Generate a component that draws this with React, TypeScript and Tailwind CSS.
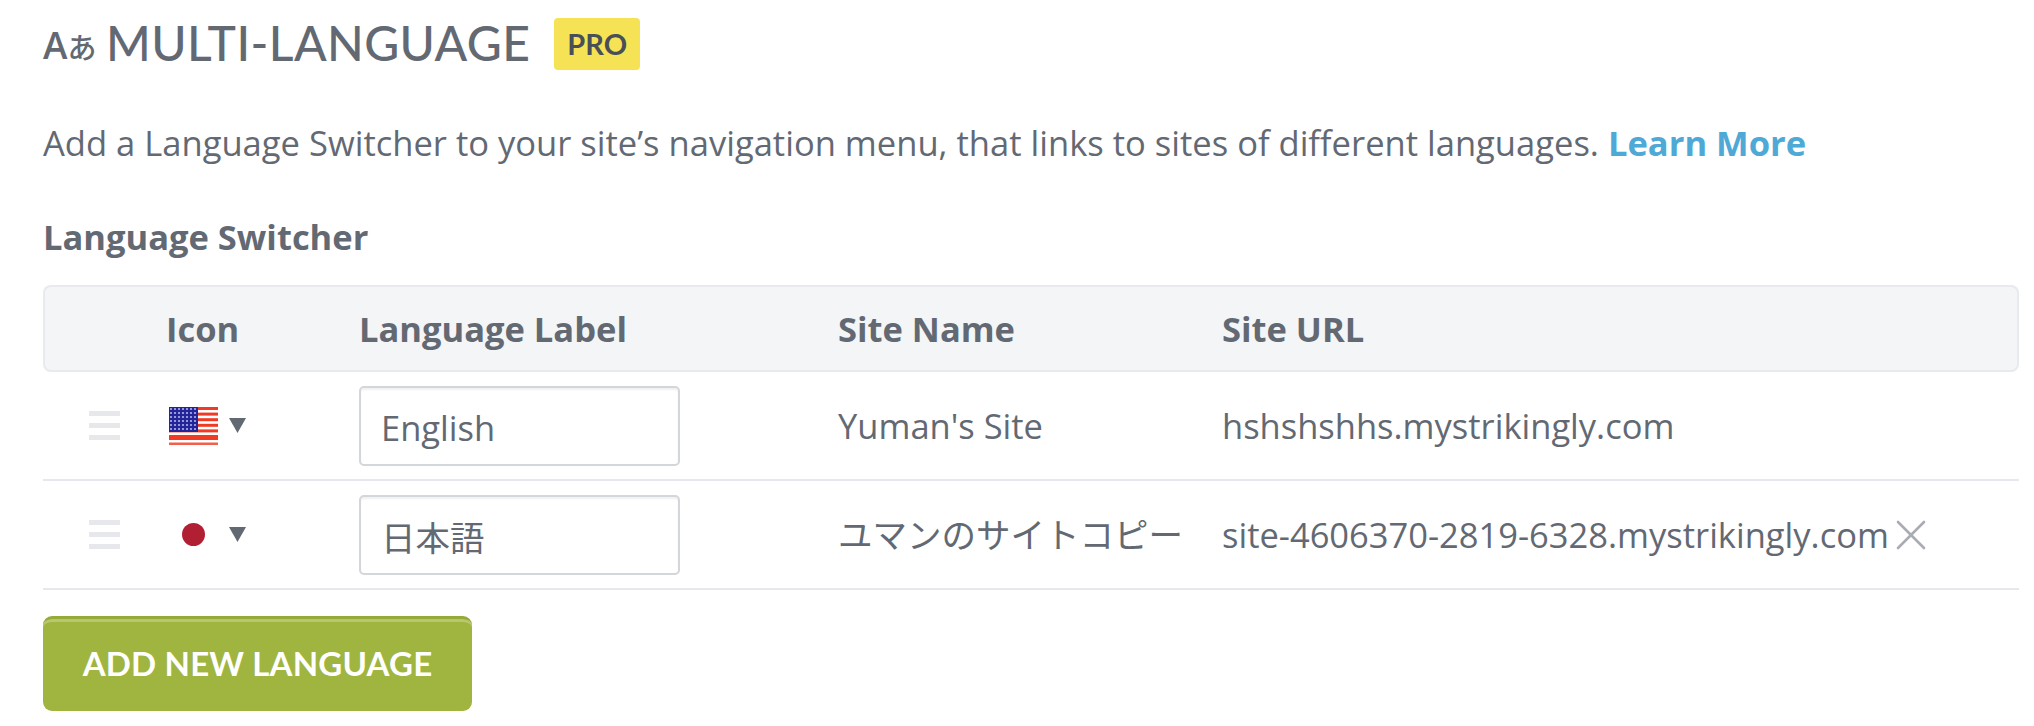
import * as React from "react"
import { X } from "lucide-react"

const COLS = "grid grid-cols-[123px_193px_479px_384px_1fr]"

function DragHandle() {
  return (
    <div className="flex w-[31px] flex-col gap-[7px]">
      <span className="h-[5px] bg-[#e6e8eb]" />
      <span className="h-[5px] bg-[#e6e8eb]" />
      <span className="h-[5px] bg-[#e6e8eb]" />
    </div>
  )
}

function Caret() {
  return (
    <svg width="17" height="15" viewBox="0 0 17 15" className="shrink-0">
      <polygon points="0,0 17,0 8.5,15" fill="#636973" />
    </svg>
  )
}

function UsFlag() {
  const stripes = [0, 1, 2, 3, 4]
  return (
    <svg width="49" height="38" viewBox="0 0 49 38" className="shrink-0">
      <defs>
        <pattern id="stars" width="4" height="4" patternUnits="userSpaceOnUse">
          <rect width="4" height="4" fill="#24249a" />
          <circle cx="2" cy="2" r="1.1" fill="#b4b4e6" />
        </pattern>
      </defs>
      <rect width="49" height="38" fill="#fff" />
      {stripes.map((i) => (
        <rect key={i} y={i * 5.6} width="49" height="3" fill="#ef3b24" />
      ))}
      <rect y="28" width="49" height="5" fill="#ef3b24" />
      <rect y="35.5" width="49" height="2.5" fill="#f0604c" />
      <rect width="29" height="25" fill="url(#stars)" />
    </svg>
  )
}

function FlagCell({ flag }: { flag: React.ReactNode }) {
  return (
    <div className="flex items-center pl-[3px]">
      <div className="flex w-[49px] justify-center">{flag}</div>
      <div className="ml-[11px]">
        <Caret />
      </div>
    </div>
  )
}

function LabelInput({ value }: { value: string }) {
  return (
    <input
      readOnly
      value={value}
      className="h-[80px] w-[321px] rounded-[5px] border-2 border-[#d3d6da] bg-white px-[20px] pt-[3px] text-[34.5px] text-[#636973] shadow-[inset_0_2px_2px_rgba(0,0,0,0.06)] outline-none"
    />
  )
}

function Row({
  flag,
  label,
  name,
  url,
  removable,
}: {
  flag: React.ReactNode
  label: string
  name: string
  url: string
  removable?: boolean
}) {
  return (
    <div className={`${COLS} h-[109px] items-center border-b-2 border-[#e6e8eb] text-[34.5px] text-[#636973]`}>
      <div className="pl-[46px]">
        <DragHandle />
      </div>
      <FlagCell flag={flag} />
      <LabelInput value={label} />
      <div className="whitespace-nowrap">{name}</div>
      <div className="flex items-center whitespace-nowrap">
        {url}
        {removable && <X className="-ml-[4px] h-[52px] w-[52px] text-[#a9adb3]" strokeWidth={1.2} />}
      </div>
    </div>
  )
}

export default function App() {
  return (
    <div
      className="h-[726px] w-[2034px] overflow-hidden bg-white pl-[43px] pr-[15px] pt-[18px] text-[#636973]"
      style={{ fontFamily: '"Open Sans", "Noto Sans CJK JP", sans-serif' }}
    >
      {/* Title */}
      <div className="flex h-[52px] items-center">
        <div className="flex w-[63px] items-baseline font-semibold leading-none">
          <span className="text-[37px]">A</span>
          <span className="text-[29px] font-medium">あ</span>
        </div>
        <h1 className="pb-[2px] text-[48px] font-medium leading-none tracking-[0.4px] [font-family:Lato,sans-serif]">MULTI-LANGUAGE</h1>
        <span className="ml-[24px] flex h-[52px] w-[86px] items-center justify-center rounded-[4px] bg-[#f5e355] text-[29px] font-bold text-[#4a4f57] [font-family:Lato,sans-serif]">
          PRO
        </span>
      </div>

      <p className="mt-[51px] whitespace-nowrap text-[34.55px] leading-[44px]">
        Add a Language Switcher to your site’s navigation menu, that links to sites of different languages.{" "}
        <a className="font-bold text-[#4fa9d6]">Learn More</a>
      </p>

      <h2 className="mt-[50px] text-[34.5px] font-bold leading-[44px]">Language Switcher</h2>

      {/* Table */}
      <div className={`${COLS} mt-[26px] h-[87px] items-center rounded-[8px] bg-[#f4f5f7] text-[34.5px] font-bold shadow-[inset_0_0_0_2px_#e8eaed]`}>
        <div />
        <div>Icon</div>
        <div>Language Label</div>
        <div>Site Name</div>
        <div>Site URL</div>
      </div>
      <Row
        flag={<UsFlag />}
        label="English"
        name="Yuman's Site"
        url="hshshshhs.mystrikingly.com"
      />
      <Row
        flag={<span className="block h-[23px] w-[23px] rounded-full bg-[#b02032]" />}
        label="日本語"
        name="ユマンのサイトコピー"
        url="site-4606370-2819-6328.mystrikingly.com"
        removable
      />

      <button className="mt-[26px] flex h-[95px] w-[429px] items-center justify-center rounded-[9px] border-t-[3px] border-[#94ab38] bg-[#9fb53f] pb-[3px] text-[33px] font-bold tracking-[0.2px] text-white shadow-[inset_0_3px_0_rgba(255,255,255,0.25)] [font-family:Lato,sans-serif]">
        ADD NEW LANGUAGE
      </button>
    </div>
  )
}
